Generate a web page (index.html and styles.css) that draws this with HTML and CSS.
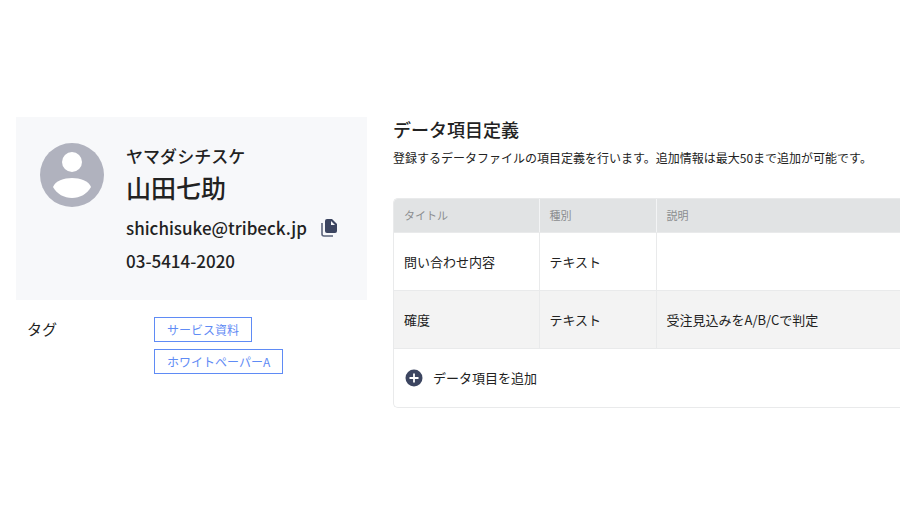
FILE: index.html
```html
<!DOCTYPE html>
<html lang="ja">
<head>
  <meta charset="UTF-8">
  <meta name="viewport" content="width=device-width, initial-scale=1">
  <title>データ項目定義</title>
  <link rel="stylesheet" href="styles.css">
</head>
<body>
  <main class="page">
    <aside class="profile">
      <section class="card">
        <svg class="avatar" viewBox="0 0 64 64" aria-hidden="true">
          <circle cx="32" cy="32" r="32" fill="#b0b2be"/>
          <circle cx="32" cy="19" r="10" fill="#fff"/>
          <path d="M13 44C15 38 24 35 32 35s17 3 19 9c-4 7-11 11-19 11s-15-4-19-11z" fill="#fff"/>
        </svg>
        <div class="person">
          <p class="kana">ヤマダシチスケ</p>
          <h2 class="name">山田七助</h2>
          <p class="contact">
            <span>shichisuke@tribeck.jp</span>
            <button class="copy-btn" type="button" aria-label="コピー">
              <svg viewBox="0 0 18 18" aria-hidden="true">
                <path d="M1 4v11q0 2 2 2h9" fill="none" stroke="#5b637a" stroke-width="1.6"/>
                <path d="M6 0h5l5 5v7q0 2-2 2H6q-2 0-2-2V2q0-2 2-2z" fill="#3c4560"/>
                <path d="M10 2v4h4z" fill="#f7f8fa"/>
              </svg>
            </button>
          </p>
          <p class="contact">03-5414-2020</p>
        </div>
      </section>
      <section class="tags">
        <h3 class="tags-label">タグ</h3>
        <ul class="tag-list">
          <li><a class="tag" href="#">サービス資料</a></li>
          <li><a class="tag" href="#">ホワイトペーパーA</a></li>
        </ul>
      </section>
    </aside>

    <section class="fields">
      <h1 class="title">データ項目定義</h1>
      <p class="lead">登録するデータファイルの項目定義を行います。追加情報は最大50まで追加が可能です。</p>
      <div class="table-box">
        <table class="table">
          <thead>
            <tr>
              <th class="col-title">タイトル</th>
              <th class="col-type">種別</th>
              <th>説明</th>
            </tr>
          </thead>
          <tbody>
            <tr>
              <td>問い合わせ内容</td>
              <td>テキスト</td>
              <td></td>
            </tr>
            <tr>
              <td>確度</td>
              <td>テキスト</td>
              <td>受注見込みをA/B/Cで判定</td>
            </tr>
          </tbody>
        </table>
        <button class="add-btn" type="button">
          <svg viewBox="0 0 18 18" aria-hidden="true">
            <circle cx="9" cy="9" r="8.5" fill="#3c4560"/>
            <path d="M9 4.5v9M4.5 9h9" stroke="#fff" stroke-width="1.8"/>
          </svg>
          <span>データ項目を追加</span>
        </button>
      </div>
    </section>
  </main>
</body>
</html>
```

FILE: styles.css
```css
* {
  box-sizing: border-box;
}

body {
  margin: 0;
  background: #fff;
  color: #222;
  font-family: "Noto Sans CJK JP", sans-serif;
  overflow-x: hidden;
}

h1, h2, h3, p, ul {
  margin: 0;
  padding: 0;
}

button {
  border: 0;
  background: none;
  font: inherit;
  color: inherit;
  cursor: pointer;
}

.page {
  display: grid;
  grid-template-columns: minmax(0, 9fr) minmax(0, 13fr);
  gap: 26px;
  min-height: 100vh;
  padding: 117px 0 96px 16px;
}

/* profile */
.card {
  display: flex;
  gap: 22px;
  padding: 26px 24px;
  background: #f7f8fa;
}

.avatar {
  flex: none;
  width: 64px;
  height: 64px;
}

.kana {
  font-size: 17px;
  font-weight: 500;
  line-height: 26px;
}

.name {
  margin-bottom: 10px;
  font-size: 25px;
  font-weight: 500;
  line-height: 36px;
}

.contact {
  display: flex;
  align-items: center;
  gap: 14px;
  font-size: 17px;
  font-weight: 500;
  line-height: 26px;
}

.contact + .contact {
  margin-top: 7px;
}

.copy-btn {
  display: flex;
  padding: 0;
}

.copy-btn svg {
  width: 18px;
  height: 18px;
}

.tags {
  display: grid;
  grid-template-columns: 127px 1fr;
  padding: 17px 11px;
}

.tags-label {
  font-size: 15px;
  font-weight: 400;
  line-height: 24px;
}

.tag-list {
  display: flex;
  flex-direction: column;
  align-items: flex-start;
  gap: 7px;
  list-style: none;
}

.tag {
  display: block;
  padding: 0 12px;
  border: 1px solid #5f8bf5;
  color: #5f8bf5;
  font-size: 12px;
  line-height: 23px;
  text-decoration: none;
}

/* field definitions */
.fields {
  min-width: 0;
}

.title {
  font-size: 18px;
  font-weight: 500;
  line-height: 24px;
}

.lead {
  margin: 5px 0 28px;
  font-size: 12px;
  line-height: 24px;
}

.table-box {
  border: 1px solid #e9eaeb;
  border-right: 0;
  border-radius: 5px 0 0 5px;
  overflow: hidden;
}

.table {
  width: 100%;
  border-collapse: collapse;
  table-layout: fixed;
}

.table th,
.table td {
  padding: 0 10px;
  border-right: 1px solid #e9eaeb;
  border-bottom: 1px solid #e9eaeb;
  text-align: left;
}

.table th:last-child,
.table td:last-child {
  border-right: 0;
}

.table th {
  height: 33px;
  border-right-color: #f3f4f5;
  background: #e1e3e4;
  color: #8b8d8f;
  font-size: 11px;
  font-weight: 400;
}

.table td {
  height: 58px;
  font-size: 13px;
}

.table tbody tr:nth-child(even) {
  background: #f3f3f3;
}

.col-title {
  width: 145px;
}

.col-type {
  width: 117px;
}

.add-btn {
  display: flex;
  align-items: center;
  gap: 10px;
  height: 58px;
  padding: 0 11px;
  font-size: 13px;
}

.add-btn svg {
  width: 18px;
  height: 18px;
}
```
